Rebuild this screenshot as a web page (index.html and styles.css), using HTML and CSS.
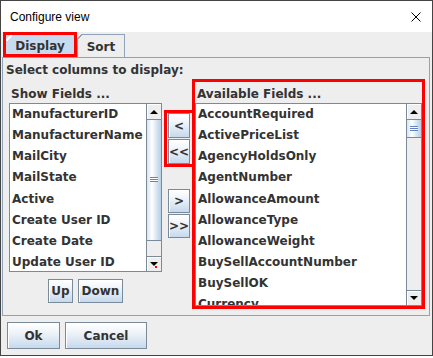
FILE: index.html
```html
<!DOCTYPE html>
<html lang="en">
<head>
    <meta charset="UTF-8">
    <meta name="viewport" content="width=device-width, initial-scale=1.0">
    <title>Configure view</title>
    <link rel="stylesheet" href="styles.css">
</head>
<body>
    <div class="window">
        <div class="title-bar">
            <span class="title">Configure view</span>
            <svg class="close" width="10" height="10" viewBox="0 0 10 10">
                <path d="M0.5 0.5 L9.5 9.5 M9.5 0.5 L0.5 9.5" stroke="#000" stroke-width="1" fill="none"/>
            </svg>
        </div>

        <div class="tabs">
            <div class="tab active marked">Display</div>
            <div class="tab">Sort</div>
        </div>

        <div class="tab-panel">
            <div class="heading">Select columns to display:</div>

            <div class="columns">
                <!-- selected fields -->
                <div class="show-column">
                    <div class="list-label">Show Fields ...</div>
                    <div class="list show-list">
                        <ul class="items">
                            <li>ManufacturerID</li>
                            <li>ManufacturerName</li>
                            <li>MailCity</li>
                            <li>MailState</li>
                            <li>Active</li>
                            <li>Create User ID</li>
                            <li>Create Date</li>
                            <li>Update User ID</li>
                        </ul>
                        <div class="scrollbar">
                            <div class="scroll-btn"><span class="arrow-up"></span></div>
                            <div class="thumb show-thumb"></div>
                            <div class="track"></div>
                            <div class="scroll-btn down"><span class="arrow-down"></span><span class="dot"></span></div>
                        </div>
                    </div>
                    <div class="order-buttons">
                        <button class="btn up-btn">Up</button>
                        <button class="btn down-btn">Down</button>
                    </div>
                </div>

                <!-- move buttons -->
                <div class="move-column">
                    <div class="move-group marked">
                        <button class="btn move-btn">&lt;</button>
                        <button class="btn move-btn">&lt;&lt;</button>
                    </div>
                    <div class="move-group lower">
                        <button class="btn move-btn">&gt;</button>
                        <button class="btn move-btn">&gt;&gt;</button>
                    </div>
                </div>

                <!-- available fields -->
                <div class="available-column marked">
                    <div class="list-label">Available Fields ...</div>
                    <div class="list available-list">
                        <ul class="items">
                            <li>AccountRequired</li>
                            <li>ActivePriceList</li>
                            <li>AgencyHoldsOnly</li>
                            <li>AgentNumber</li>
                            <li>AllowanceAmount</li>
                            <li>AllowanceType</li>
                            <li>AllowanceWeight</li>
                            <li>BuySellAccountNumber</li>
                            <li>BuySellOK</li>
                            <li>Currency</li>
                        </ul>
                        <div class="scrollbar">
                            <div class="scroll-btn"><span class="arrow-up"></span></div>
                            <div class="thumb available-thumb"></div>
                            <div class="track"></div>
                            <div class="scroll-btn down"><span class="arrow-down"></span></div>
                        </div>
                    </div>
                </div>
            </div>
        </div>

        <div class="footer">
            <button class="btn ok-btn">Ok</button>
            <button class="btn cancel-btn">Cancel</button>
        </div>
    </div>
</body>
</html>
```

FILE: styles.css
```css
/* basic layout */
* {
    box-sizing: border-box;
}

body {
    margin: 0;
    background-color: #ffffff;
    font-family: "DejaVu Sans", sans-serif;
    font-size: 12px;
    font-weight: bold;
    color: #333333;
}

.window {
    width: 433px;
    height: 356px;
    border: 1px solid #444444;
    background-color: #eeeeee;
    display: flex;
    flex-direction: column;
}

.title-bar {
    height: 31px;
    flex-shrink: 0;
    background-color: #ffffff;
    display: flex;
    align-items: center;
    justify-content: space-between;
    padding: 0 11px 0 9px;
    font-family: "Liberation Sans", sans-serif;
    font-weight: normal;
    color: #000000;
}

.close {
    display: block;
}

/* tabs */
.tabs {
    display: flex;
    align-items: flex-end;
    height: 25px;
    flex-shrink: 0;
    padding-left: 2px;
}

.tab {
    position: relative;
    height: 23px;
    width: 48px;
    border: 1px solid #8ea3ba;
    border-bottom: none;
    text-align: center;
    line-height: 14px;
    padding-top: 5px;
}

.tab::before {
    content: "";
    position: absolute;
    top: -1px;
    left: -1px;
    width: 6px;
    height: 6px;
    background: linear-gradient(135deg, #eeeeee 40%, #8ea3ba 40%, #8ea3ba 55%, transparent 55%);
}

.tab.active {
    width: 74px;
    height: 25px;
    background-color: #c8daee;
    padding-top: 4px;
}

.tab.active::before {
    top: 0;
    left: 0;
    background: linear-gradient(135deg, transparent 40%, #ffffff 40%, #ffffff 60%, transparent 60%);
}

.marked {
    border: 3px solid #ff0000;
}

.tab-panel {
    margin: 0 2px 0 1px;
    border: 1px solid #8ea3ba;
    padding: 5px 3px 6px;
}

.heading {
    line-height: 14px;
    padding-left: 0;
}

.columns {
    display: flex;
    align-items: flex-start;
    margin-top: 2px;
    padding-left: 3px;
}

.list-label {
    line-height: 14px;
}

/* lists */
.show-column {
    width: 153px;
    padding-top: 8px;
}

.show-column .list-label {
    padding-left: 2px;
}

.list {
    display: flex;
    border: 1px solid #7a8a99;
    background-color: #ffffff;
    overflow: hidden;
}

.show-list {
    margin-top: 2px;
    height: 169px;
}

.items {
    flex: 1;
    list-style: none;
    margin: 0;
    padding: 0 0 0 2px;
    overflow: hidden;
    white-space: nowrap;
}

.items li {
    height: 21.15px;
    line-height: 21px;
}

.scrollbar {
    width: 15px;
    flex-shrink: 0;
    border-left: 1px solid #7a8a99;
    display: flex;
    flex-direction: column;
    background-color: #eeeeee;
}

.scroll-btn {
    position: relative;
    height: 16px;
    flex-shrink: 0;
    border-bottom: 1px solid #7a8a99;
    background-color: #eeeeee;
    box-shadow: inset 1px 1px 0 #ffffff;
    display: flex;
    align-items: center;
    justify-content: center;
}

.scroll-btn.down {
    border-bottom: none;
    border-top: 1px solid #7a8a99;
    height: 15px;
}

.arrow-up {
    width: 0;
    height: 0;
    border-left: 4px solid transparent;
    border-right: 4px solid transparent;
    border-bottom: 4px solid #000000;
}

.arrow-down {
    width: 0;
    height: 0;
    border-left: 4px solid transparent;
    border-right: 4px solid transparent;
    border-top: 4px solid #000000;
}

.dot {
    position: absolute;
    left: 8px;
    top: 9px;
    width: 2px;
    height: 2px;
    background-color: #ff0000;
}

.thumb {
    position: relative;
    flex-shrink: 0;
    border-bottom: 1px solid #7a8a99;
    background: linear-gradient(to right, #d6e4f3, #ffffff 35%, #dbe7f4 65%, #b8cfe5);
}

.thumb::after {
    content: "";
    position: absolute;
    left: 3px;
    right: 3px;
    top: 50%;
    height: 5px;
    margin-top: -3px;
    background: repeating-linear-gradient(to bottom, #6382bf 0, #6382bf 1px, #ffffff 1px, #ffffff 2px);
}

.show-thumb {
    height: 121px;
}

.available-thumb {
    height: 18px;
}

.track {
    flex: 1;
}

/* buttons */
.btn {
    font: inherit;
    color: #333333;
    border: 1px solid #7a8a99;
    border-radius: 0;
    padding: 0;
    margin: 0;
    background: linear-gradient(to bottom, #ffffff, #f1f5fa 35%, #c6d9ed);
    box-shadow: inset 1px 1px 0 #ffffff;
    display: flex;
    align-items: center;
    justify-content: center;
    cursor: pointer;
}

.order-buttons {
    display: flex;
    justify-content: center;
    gap: 5px;
    margin-top: 7px;
}

.up-btn {
    width: 25px;
    height: 24px;
}

.down-btn {
    width: 45px;
    height: 24px;
}

.move-column {
    width: 31px;
    margin-left: 2px;
    margin-right: -3px;
    padding-top: 31px;
}

.move-group {
    display: flex;
    flex-direction: column;
    gap: 1px;
}

.move-group.marked {
    padding: 0 2px 0 1px;
}

.move-btn {
    width: 22px;
    height: 25px;
}

.move-group.lower {
    margin-top: 22px;
    padding-left: 4px;
}

.move-group.lower .move-btn {
    height: 24px;
}

.available-column {
    width: 233px;
    height: 230px;
    display: flex;
    flex-direction: column;
}

.available-column .list-label {
    padding: 5px 0 2px 2px;
}

.available-list {
    flex: 1;
}

/* bottom buttons */
.footer {
    display: flex;
    gap: 5px;
    padding: 6px 0 0 6px;
}

.ok-btn {
    width: 53px;
    height: 27px;
}

.cancel-btn {
    width: 82px;
    height: 27px;
}
```
